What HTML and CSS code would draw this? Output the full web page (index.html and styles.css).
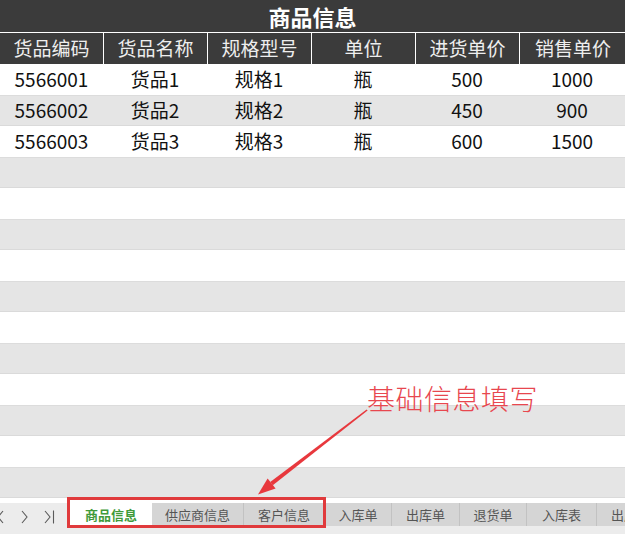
FILE: index.html
```html
<!DOCTYPE html>
<html lang="zh">
<head>
<meta charset="utf-8">
<title>商品信息</title>
<link rel="stylesheet" href="styles.css">
</head>
<body>
<div class="sheet">
  <div class="title">商品信息</div>
  <div class="head">
    <div class="hc">货品编码</div>
    <div class="hc">货品名称</div>
    <div class="hc">规格型号</div>
    <div class="hc">单位</div>
    <div class="hc">进货单价</div>
    <div class="hc">销售单价</div>
  </div>
  <div class="rows">
    <div class="row"><div>5566001</div><div>货品1</div><div>规格1</div><div>瓶</div><div>500</div><div>1000</div></div>
    <div class="row alt"><div>5566002</div><div>货品2</div><div>规格2</div><div>瓶</div><div>450</div><div>900</div></div>
    <div class="row"><div>5566003</div><div>货品3</div><div>规格3</div><div>瓶</div><div>600</div><div>1500</div></div>
    <div class="row alt"></div>
    <div class="row"></div>
    <div class="row alt"></div>
    <div class="row"></div>
    <div class="row alt"></div>
    <div class="row"></div>
    <div class="row alt"></div>
    <div class="row"></div>
    <div class="row alt"></div>
    <div class="row"></div>
    <div class="row alt"></div>
  </div>
  <div class="tabbar">
    <div class="nav">
      <svg width="68" height="30" viewBox="0 0 68 30">
        <polyline points="3,8 -2,14 3,20" fill="none" stroke="#5a5a5a" stroke-width="1.1"/>
        <polyline points="22,8 27,14 22,20" fill="none" stroke="#5a5a5a" stroke-width="1.1"/>
        <polyline points="45,8 50,14 45,20" fill="none" stroke="#5a5a5a" stroke-width="1.1"/>
        <line x1="53.5" y1="7.5" x2="53.5" y2="20.5" stroke="#5a5a5a" stroke-width="1.1"/>
      </svg>
    </div>
    <div class="tabs">
      <div class="tab active w1">商品信息</div>
      <div class="tab w2">供应商信息</div>
      <div class="tab w3">客户信息</div>
      <div class="tab w4">入库单</div>
      <div class="tab w5">出库单</div>
      <div class="tab w6">退货单</div>
      <div class="tab w7">入库表</div>
      <div class="tab w8">出库表</div>
    </div>
  </div>
  <div class="frame"></div>
  <div class="note">基础信息填写</div>
  <svg class="arrow" width="625" height="534" viewBox="0 0 625 534">
    <polygon points="366.6,409.6 367.6,410.4 272.8,485.3 270.2,481.9" fill="#e8383d"/>
    <polygon points="258,494.5 267.6,478.6 275.6,488.6" fill="#e8383d"/>
  </svg>
</div>
</body>
</html>
```
FILE: styles.css
```css
html, body {
  margin: 0;
  padding: 0;
  background: #ffffff;
}
.sheet {
  position: relative;
  width: 625px;
  height: 534px;
  overflow: hidden;
  display: flex;
  flex-direction: column;
  font-family: "Noto Sans CJK SC", "Noto Sans", sans-serif;
}
.title {
  height: 33px;
  background: #3b3b3b;
  color: #ffffff;
  font-weight: bold;
  font-size: 22px;
  line-height: 33px;
  text-align: center;
  border-bottom: 1px solid #ffffff;
  box-sizing: border-box;
  flex: none;
}
.head {
  height: 31px;
  display: grid;
  grid-template-columns: 103px 103px 103px 103px 103px 106px;
  column-gap: 1px;
  background: #ffffff;
  flex: none;
}
.hc {
  background: #3b3b3b;
  color: #eeeeee;
  font-size: 19px;
  line-height: 30px;
  text-align: center;
}
.rows {
  display: flex;
  flex-direction: column;
  flex: none;
}
.row {
  height: 31px;
  box-sizing: border-box;
  display: grid;
  grid-template-columns: 103px 104px 104px 104px 104px 106px;
  font-size: 19px;
  line-height: 30px;
  color: #111111;
  text-align: center;
}
.row.alt {
  background: #e5e5e5;
  border-top: 1px solid #dcdcdc;
  border-bottom: 1px solid #dadada;
}
.row.alt > div {
  line-height: 28px;
}
.tabbar {
  flex: 1;
  display: flex;
  background: #ececec;
  border-top: 5px solid #ffffff;
}
.nav {
  width: 70px;
  flex: none;
}
.nav svg {
  display: block;
}
.tabs {
  display: flex;
  height: 23px;
  align-items: stretch;
}
.tab {
  background: #d5d5d5;
  color: #555555;
  font-size: 13px;
  line-height: 23px;
  text-align: center;
  border-right: 1px solid #c2c2c2;
  box-sizing: border-box;
  white-space: nowrap;
  overflow: hidden;
  flex: none;
}
.tab.active {
  background: #ffffff;
  color: #3f9a3a;
  font-weight: bold;
  border-right: none;
}
.w1 { width: 82px; }
.w2 { width: 92px; }
.w3 { width: 81px; }
.w4 { width: 67px; }
.w5 { width: 68px; }
.w6 { width: 67px; }
.w7 { width: 70px; }
.w8 { width: 60px; text-align: left; padding-left: 14px; }
.frame {
  position: absolute;
  left: 67px;
  top: 497px;
  width: 259px;
  height: 31px;
  border: 3px solid #e03a3c;
  box-sizing: border-box;
}
.note {
  position: absolute;
  left: 367px;
  top: 380px;
  font-size: 28px;
  line-height: 36px;
  font-weight: 300;
  color: #e8474f;
  letter-spacing: 0.5px;
}
.arrow {
  position: absolute;
  left: 0;
  top: 0;
  pointer-events: none;
}
```
